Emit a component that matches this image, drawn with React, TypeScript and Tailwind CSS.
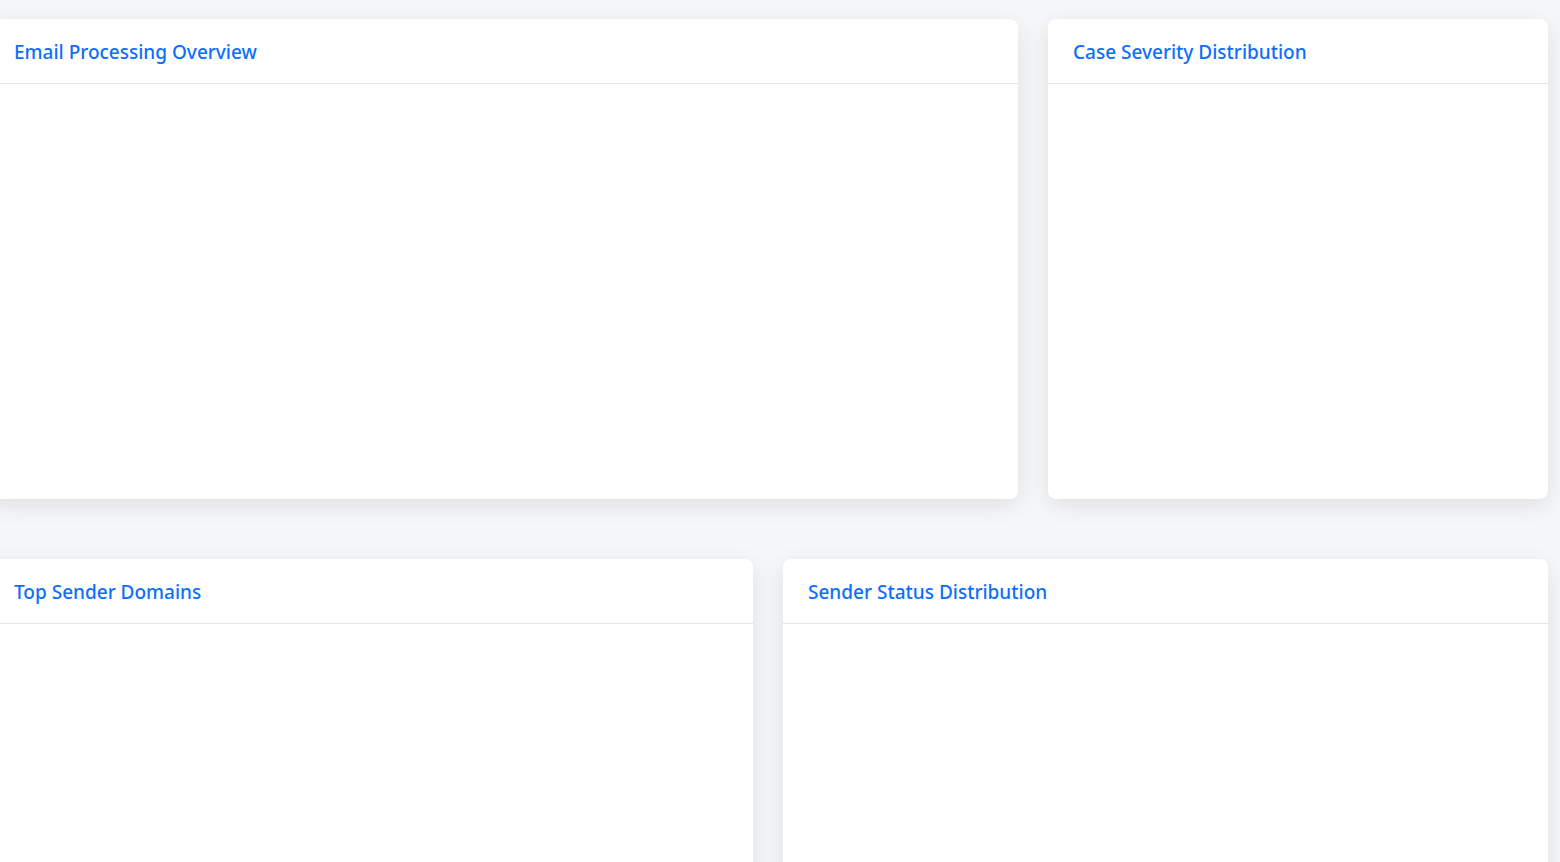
const rowOne = [
  { title: "Email Processing Overview" },
  { title: "Case Severity Distribution" },
];

const rowTwo = [
  { title: "Top Sender Domains" },
  { title: "Sender Status Distribution" },
];

function ChartCard({ title }: { title: string }) {
  return (
    <div className="bg-white rounded-lg shadow-[0_6px_24px_rgba(0,0,0,0.1)] h-[480px] flex flex-col">
      <div className="h-[65px] flex items-center px-[25px] pt-[3px] border-b border-[#e3e5e8]">
        <h5 className="text-[19px] font-medium text-[#0d6efd] leading-none">{title}</h5>
      </div>
      <div className="flex-1" />
    </div>
  );
}

export default function App() {
  return (
    <div
      className="min-h-screen bg-[#f6f7f9] overflow-hidden"
      style={{ fontFamily: '"Noto Sans", "Open Sans", sans-serif' }}
    >
      <div className="ml-[-11px] pt-[19px] flex flex-col gap-[60px]">
        <div className="grid grid-cols-[1029px_500px] gap-[30px]">
          {rowOne.map((c) => (
            <ChartCard key={c.title} title={c.title} />
          ))}
        </div>
        <div className="grid grid-cols-[764px_765px] gap-[30px]">
          {rowTwo.map((c) => (
            <ChartCard key={c.title} title={c.title} />
          ))}
        </div>
      </div>
    </div>
  );
}
